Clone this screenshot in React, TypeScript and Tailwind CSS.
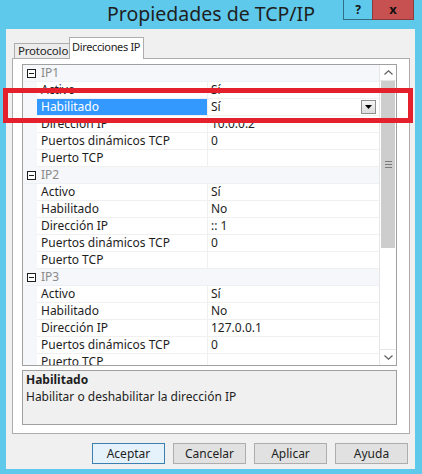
import React from "react";

type Row = [string, string];

const sections: { name: string; rows: Row[] }[] = [
  {
    name: "IP1",
    rows: [
      ["Activo", "Sí"],
      ["Habilitado", "Sí"],
      ["Dirección IP", "10.0.0.2"],
      ["Puertos dinámicos TCP", "0"],
      ["Puerto TCP", ""],
    ],
  },
  {
    name: "IP2",
    rows: [
      ["Activo", "Sí"],
      ["Habilitado", "No"],
      ["Dirección IP", ":: 1"],
      ["Puertos dinámicos TCP", "0"],
      ["Puerto TCP", ""],
    ],
  },
  {
    name: "IP3",
    rows: [
      ["Activo", "Sí"],
      ["Habilitado", "No"],
      ["Dirección IP", "127.0.0.1"],
      ["Puertos dinámicos TCP", "0"],
      ["Puerto TCP", ""],
    ],
  },
];

function MinusBox() {
  return (
    <div className="w-[9px] h-[9px] border border-[#1e1e1e] bg-white flex items-center justify-center">
      <div className="w-[5px] h-px bg-[#1e1e1e]" />
    </div>
  );
}

function CategoryRow({ name }: { name: string }) {
  return (
    <div className="flex h-[17px] bg-[#f5f7fa] border-b border-[#edf0f4]">
      <div className="w-[14px] flex items-center justify-center pl-[2px]">
        <MinusBox />
      </div>
      <div className="pl-[4px] text-[12px] leading-[16px] text-[#8a8a8a]">{name}</div>
    </div>
  );
}

function PropRow({ label, value, selected }: { label: string; value: string; selected?: boolean }) {
  return (
    <div className="flex h-[17px]">
      <div className="w-[14px] bg-[#f5f7fa]" />
      <div
        className={`w-[171px] h-[17px] pl-[4px] text-[12px] leading-[16px] whitespace-nowrap border-b border-r border-[#f0f0f0] ${
          selected ? "bg-[#3399ff] text-white" : "bg-white text-[#1e1e1e]"
        }`}
      >
        {label}
      </div>
      <div className="flex-1 h-[17px] flex items-start pl-[3px] text-[12px] leading-[16px] text-[#1e1e1e] border-b border-[#f0f0f0] bg-white">
        <span className="flex-1">{value}</span>
        {selected && (
          <div className="mt-[1px] mr-[3px] w-[15px] h-[14px] border border-[#8f8f8f] bg-gradient-to-b from-[#f6f6f6] to-[#dcdcdc] flex items-center justify-center">
            <svg width="7" height="4" viewBox="0 0 7 4">
              <path d="M0 0h7L3.5 4z" fill="#000" />
            </svg>
          </div>
        )}
      </div>
    </div>
  );
}

function ScrollBar() {
  return (
    <div className="w-[17px] h-full bg-white border-l border-[#e6e6e6] flex flex-col">
      <div className="h-[16px] flex items-center justify-center border-b border-[#e6e6e6]">
        <svg width="9" height="5" viewBox="0 0 9 5">
          <path d="M0.5 4.5L4.5 0.8L8.5 4.5" stroke="#606060" strokeWidth="1.2" fill="none" />
        </svg>
      </div>
      <div className="h-[167px] mx-[1px] bg-[#cdcdcd] flex items-center justify-center">
        <div className="flex flex-col gap-[2px]">
          <div className="w-[7px] h-px bg-[#7a7a7a]" />
          <div className="w-[7px] h-px bg-[#7a7a7a]" />
          <div className="w-[7px] h-px bg-[#7a7a7a]" />
        </div>
      </div>
      <div className="flex-1" />
      <div className="h-[16px] flex items-center justify-center border-t border-[#e6e6e6]">
        <svg width="9" height="5" viewBox="0 0 9 5">
          <path d="M0.5 0.5L4.5 4.2L8.5 0.5" stroke="#606060" strokeWidth="1.2" fill="none" />
        </svg>
      </div>
    </div>
  );
}

function Btn({ label, primary }: { label: string; primary?: boolean }) {
  return (
    <div
      className={`w-[73px] h-[21px] flex items-center justify-center text-[12px] text-[#1e1e1e] border ${
        primary ? "border-[#3c7fb1] bg-[#e5f1fb]" : "border-[#adadad] bg-[#e1e1e1]"
      }`}
    >
      {label}
    </div>
  );
}

export default function App() {
  return (
    <div className="relative w-[422px] h-[474px] bg-[#5fc9eb] font-['Noto_Sans',sans-serif] overflow-hidden">
      {/* title bar */}
      <div className="relative h-[29px] flex items-center justify-center">
        <span className="text-[19.5px] text-[#1e1e1e] leading-none mt-[-2px]">Propiedades de TCP/IP</span>
        <div className="absolute top-0 left-[343px] w-[30px] h-[20px] border border-[#2f6f86] border-t-0 flex items-center justify-center text-[12px] font-bold text-[#111]">
          ?
        </div>
        <div className="absolute top-0 left-[372px] w-[42px] h-[20px] bg-[#c75050] border border-[#8d3a3a] border-t-0 flex items-center justify-center text-[13px] font-bold text-[#111]">
          x
        </div>
      </div>

      {/* client area */}
      <div className="ml-[6px] w-[409px] h-[440px] bg-[#f0f0f0] pt-[7px] pl-[6px]">
        <div className="flex items-end h-[22px] pl-[2px]">
          <div className="w-[56px] h-[16px] border border-[#adadad] bg-[#ececec] text-[11.5px] leading-[14px] text-[#1e1e1e] pl-[3px] mb-[-1px] whitespace-nowrap overflow-hidden tracking-[-0.2px]">
            Protocolo
          </div>
          <div className="relative z-10 w-[75px] h-[22px] border border-b-0 border-[#adadad] bg-white text-[11px] leading-[18px] text-[#1e1e1e] pl-[2px] mb-[-1px] ml-[-1px] whitespace-nowrap overflow-hidden tracking-[-0.35px]">
            Direcciones IP
          </div>
        </div>
        <div className="w-[398px] h-[376px] border border-[#adadad] bg-white pt-[5px] pl-[9px]">
          <div className="w-[375px] h-[302px] border border-[#a0a0a0] flex">
            <div className="flex-1 overflow-hidden">
              {sections.map((s, si) => (
                <div key={s.name}>
                  <CategoryRow name={s.name} />
                  {s.rows.map(([l, v], ri) => (
                    <PropRow key={l} label={l} value={v} selected={si === 0 && ri === 1} />
                  ))}
                </div>
              ))}
            </div>
            <ScrollBar />
          </div>
          <div className="mt-[4px] w-[375px] h-[55px] border border-[#a0a0a0] bg-[#f0f0f0] px-[3px] pt-[1px] text-[12px] text-[#1e1e1e]">
            <div className="font-bold leading-[16px]">Habilitado</div>
            <div className="leading-[16px] mt-[1px]">Habilitar o deshabilitar la dirección IP</div>
          </div>
        </div>
        <div className="flex justify-end gap-[8px] pr-[7px] mt-[9px]">
          <Btn label="Aceptar" primary />
          <Btn label="Cancelar" />
          <Btn label="Aplicar" />
          <Btn label="Ayuda" />
        </div>
      </div>

      {/* red highlight annotation */}
      <div className="absolute left-[3px] top-[88px] w-[410px] h-[35px] border-[5px] border-[#e4202c]" />
    </div>
  );
}
